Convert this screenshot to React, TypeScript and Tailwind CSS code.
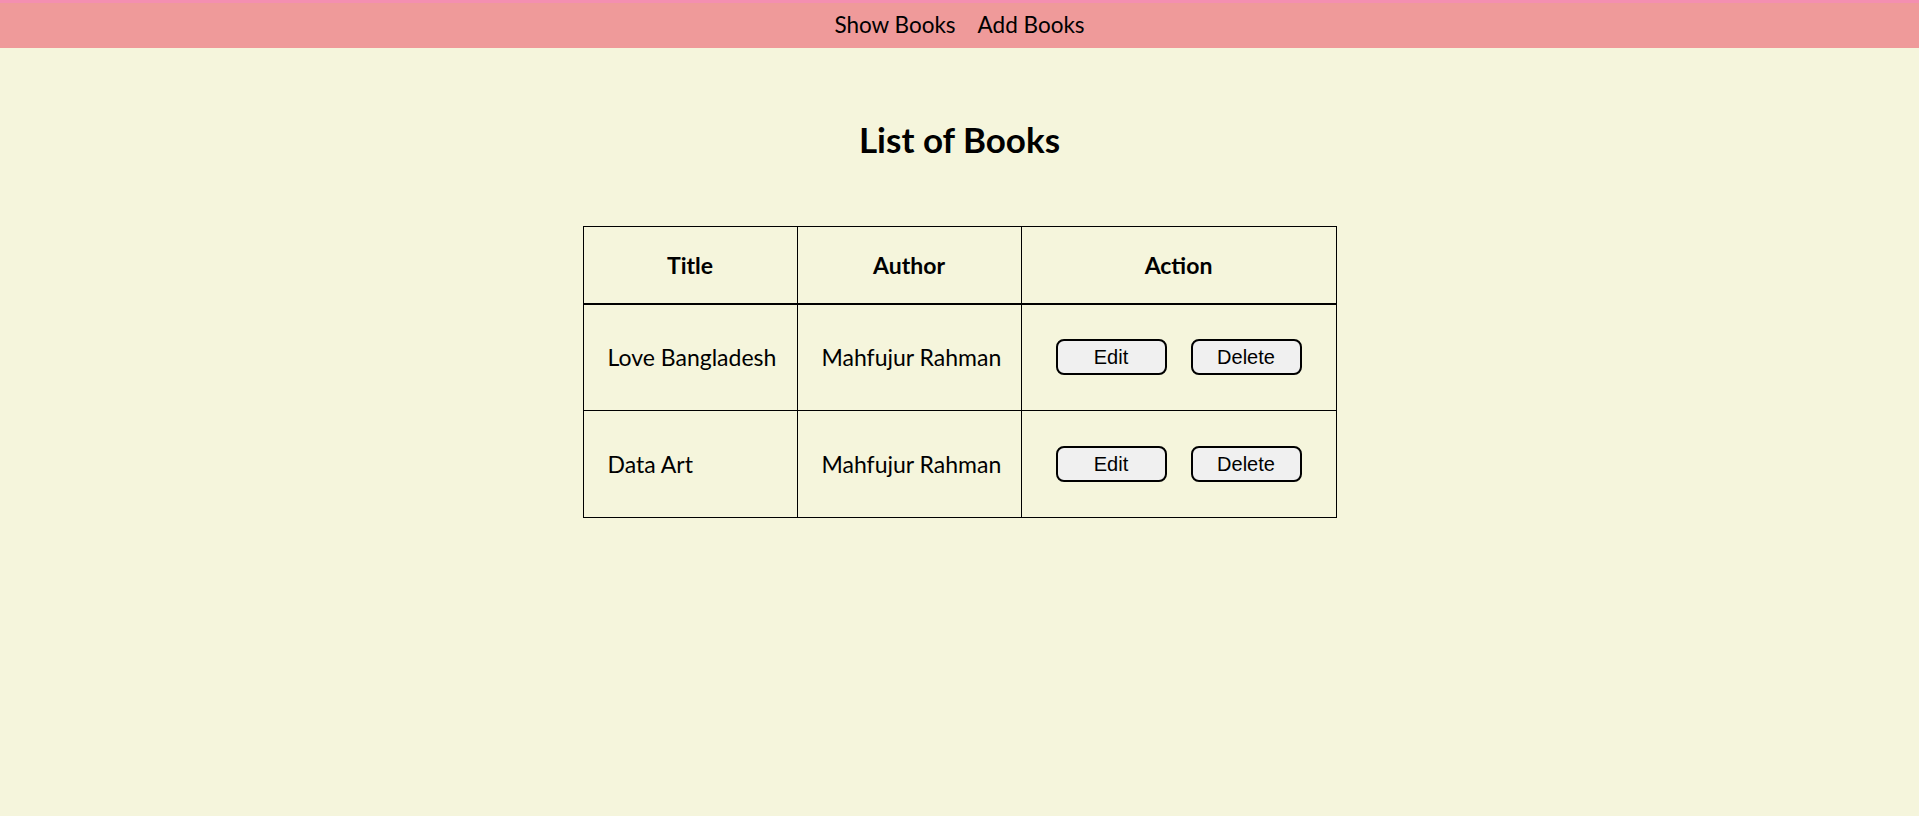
import React from 'react';

const books = [
  { title: 'Love Bangladesh', author: 'Mahfujur Rahman' },
  { title: 'Data Art', author: 'Mahfujur Rahman' },
];

const App = () => {
  return (
    <div className="min-h-screen bg-[#f5f5dc] text-black font-['Lato',sans-serif]">
      <nav className="h-12 border-t-[3px] border-[#f48fb1] bg-[#ef9a9a] flex items-center justify-center gap-[22px] text-[22.5px]">
        <a href="#" className="leading-none whitespace-nowrap">Show Books</a>
        <a href="#" className="leading-none whitespace-nowrap">Add Books</a>
      </nav>

      <h1 className="mt-[69px] text-center text-[35px] font-bold leading-[44px]">List of Books</h1>

      <table className="mx-auto mt-[65px] w-[753px] table-fixed border-collapse border border-black text-[23px] whitespace-nowrap">
        <thead>
          <tr className="h-[77px] border-b-2 border-black">
            <th className="w-[214px] border border-black font-bold">Title</th>
            <th className="w-[224px] border border-black font-bold">Author</th>
            <th className="w-[315px] border border-black font-bold">Action</th>
          </tr>
        </thead>
        <tbody>
          {books.map((b) => (
            <tr key={b.title} className="h-[107px]">
              <td className="border border-black px-6 text-left">{b.title}</td>
              <td className="border border-black px-6 text-left">{b.author}</td>
              <td className="border border-black">
                <div className="flex justify-center gap-6">
                  <button className="w-[111px] h-9 rounded-lg border-2 border-black bg-[#f0f0f0] text-[20px] font-['Liberation_Sans',sans-serif]">
                    Edit
                  </button>
                  <button className="w-[111px] h-9 rounded-lg border-2 border-black bg-[#f0f0f0] text-[20px] font-['Liberation_Sans',sans-serif]">
                    Delete
                  </button>
                </div>
              </td>
            </tr>
          ))}
        </tbody>
      </table>
    </div>
  );
};

export default App;
